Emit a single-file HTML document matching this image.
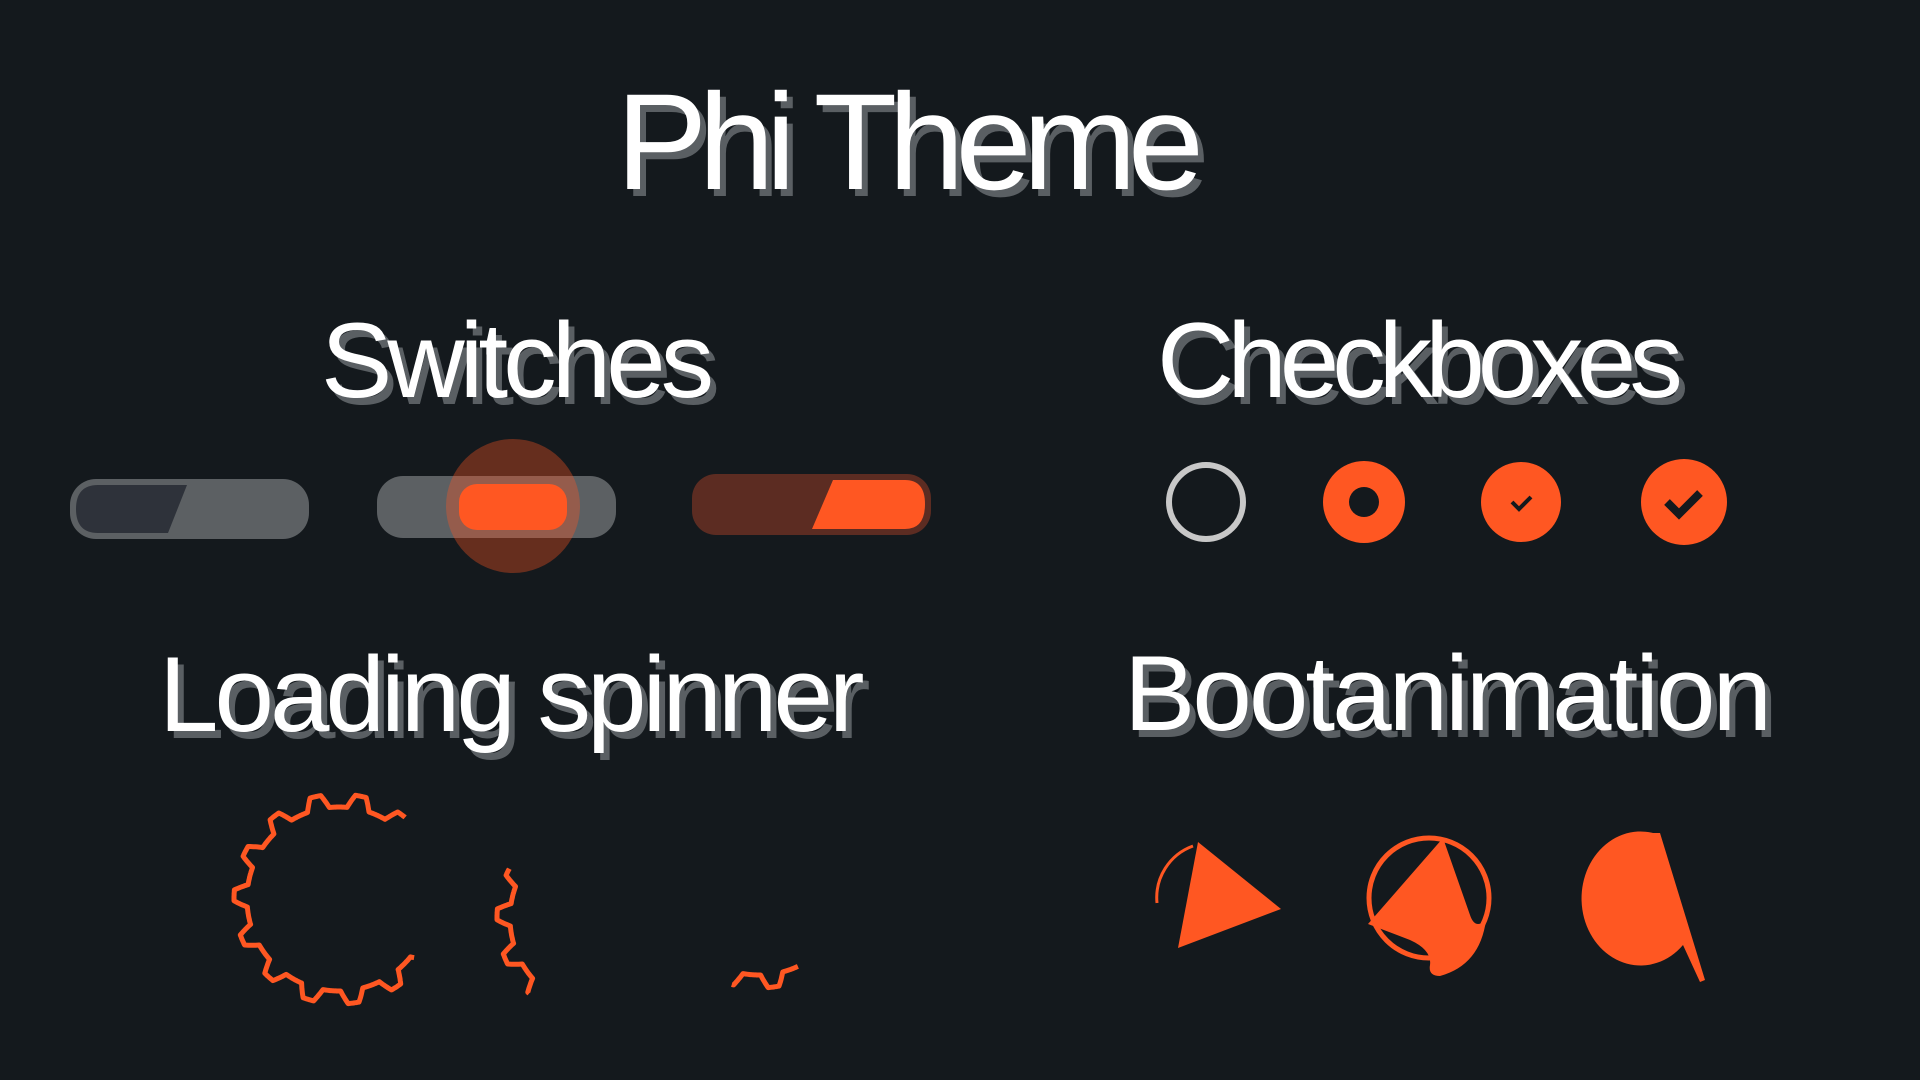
<!DOCTYPE html>
<html><head><meta charset="utf-8"><style>
html,body{margin:0;padding:0}
body{width:1920px;height:1080px;background:#14191d;position:relative;overflow:hidden;font-family:"Liberation Sans",sans-serif;color:#fff}
.t{position:absolute;line-height:1;white-space:nowrap;text-shadow:6px 7px 0 #5a5f63}
</style></head><body>
<div class="t" style="left:616px;top:74px;font-size:137px;letter-spacing:-9px">Phi Theme</div>
<div class="t" style="left:321px;top:307px;font-size:107px;letter-spacing:-5px">Switches</div>
<div class="t" style="left:1157px;top:307px;font-size:107px;letter-spacing:-7px">Checkboxes</div>
<div class="t" style="left:159px;top:641px;font-size:107px;letter-spacing:-4px">Loading spinner</div>
<div class="t" style="left:1124px;top:640px;font-size:107px;letter-spacing:-3px">Bootanimation</div>
<svg width="1920" height="1080" style="position:absolute;left:0;top:0">
<rect x="70" y="479" width="239" height="60" rx="26" fill="#5c6063"/>
<path d="M98 485 L187 485 L168 533 L98 533 Q76 533 76 509 Q76 485 98 485Z" fill="#2e323a"/>
<rect x="377" y="476" width="239" height="62" rx="26" fill="#5c6063"/>
<circle cx="513" cy="506" r="67" fill="#ff5722" fill-opacity="0.35"/>
<rect x="459" y="484" width="108" height="46" rx="18" fill="#ff5722"/>
<rect x="692" y="474" width="239" height="61" rx="24" fill="#5c2c22"/>
<path d="M833 480 L905 480 Q925 480 925 504 Q925 529 905 529 L812 529Z" fill="#ff5722"/>
<circle cx="1206" cy="502" r="37" fill="none" stroke="#c8c8c8" stroke-width="6"/>
<circle cx="1364" cy="502" r="41" fill="#ff5722"/>
<circle cx="1364" cy="502" r="15" fill="#14191d"/>
<circle cx="1521" cy="502" r="40" fill="#ff5722"/>
<path d="M1512 502 L1519 509 L1531 497" fill="none" stroke="#14191d" stroke-width="4"/>
<circle cx="1684" cy="502" r="43" fill="#ff5722"/>
<path d="M1667 502 L1679 514 L1700 493" fill="none" stroke="#14191d" stroke-width="8"/>
<g id="sp" fill="none" stroke="#ff5722" stroke-width="5" stroke-linejoin="round"></g>
<path d="M1198 842 L1281 909 L1178 948Z" fill="#ff5722"/>
<path d="M1157 903 A55 55 0 0 1 1193 846" fill="none" stroke="#ff5722" stroke-width="3"/>
<circle cx="1429" cy="898" r="60" fill="none" stroke="#ff5722" stroke-width="5"/>
<path d="M1443 838 L1368 924 L1410 940 Q1432 950 1430 965 Q1428 976 1440 976 Q1480 965 1486 920 Q1475 930 1470 915 Z" fill="#ff5722"/>
<path d="M1653 833 A59 67 0 1 0 1683 945 L1700 982 L1705 980 L1660 833 Z" fill="#ff5722"/>
</svg>
<script>
(function(){
var g=document.getElementById('sp');
function gear(cx,cy,ri,ro,a0,a1){
 var per=25,pts=[];
 for(var a=a0;a<=a1+0.01;a+=0.5){
  var ph=((a%per)+per)%per;
  var r;
  if(ph<4)r=ri+(ro-ri)*ph/4;else if(ph<10)r=ro;else if(ph<14)r=ro-(ro-ri)*(ph-10)/4;else r=ri;
  var rad=a*Math.PI/180;
  pts.push((cx+r*Math.cos(rad)).toFixed(1)+','+(cy+r*Math.sin(rad)).toFixed(1));
 }
 var p=document.createElementNS('http://www.w3.org/2000/svg','polyline');
 p.setAttribute('points',pts.join(' '));
 g.appendChild(p);
}
gear(339,899,92,105,38,309);
gear(602,918,92,105,134,208);
gear(759,883,92,105,65,105);
})();
</script>
</body></html>
